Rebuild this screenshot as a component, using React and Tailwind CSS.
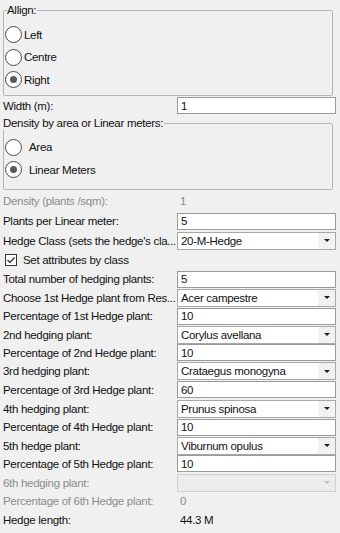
import { useState } from 'react';

const ROWS = [
  { label: 'Density (plants /sqm):', kind: 'static', value: '1', disabled: true, h: 'h-[21px]' },
  { label: 'Plants per Linear meter:', kind: 'text', value: '5', h: 'h-[20px]' },
  { label: "Hedge Class (sets the hedge's cla...", kind: 'combo', value: '20-M-Hedge', h: 'h-[19px]' },
  { kind: 'check', label: 'Set attributes by class', h: 'h-[20px]' },
  { label: 'Total number of hedging plants:', kind: 'text', value: '5', h: 'h-[18.5px]' },
  { label: 'Choose 1st Hedge plant from Res...', kind: 'combo', value: 'Acer campestre', h: 'h-[18.5px]' },
  { label: 'Percentage of 1st Hedge plant:', kind: 'text', value: '10', h: 'h-[18.5px]' },
  { label: '2nd hedging plant:', kind: 'combo', value: 'Corylus avellana', h: 'h-[18px]' },
  { label: 'Percentage of 2nd Hedge plant:', kind: 'text', value: '10', h: 'h-[18.5px]' },
  { label: '3rd hedging plant:', kind: 'combo', value: 'Crataegus monogyna', h: 'h-[18.5px]' },
  { label: 'Percentage of 3rd Hedge plant:', kind: 'text', value: '60', h: 'h-[18.5px]' },
  { label: '4th hedging plant:', kind: 'combo', value: 'Prunus spinosa', h: 'h-[19px]' },
  { label: 'Percentage of 4th Hedge plant:', kind: 'text', value: '10', h: 'h-[18.5px]' },
  { label: '5th hedge plant:', kind: 'combo', value: 'Viburnum opulus', h: 'h-[18px]' },
  { label: 'Percentage of 5th Hedge plant:', kind: 'text', value: '10', h: 'h-[18.5px]' },
  { label: '6th hedging plant:', kind: 'combo', value: '', disabled: true, h: 'h-[19px]' },
  { label: 'Percentage of 6th Hedge plant:', kind: 'static', value: '0', disabled: true, h: 'h-[18.5px]' },
  { label: 'Hedge length:', kind: 'static', value: '44.3 M', h: 'h-[18px]' },
];

function Radio({ label, checked, onClick, gap }) {
  return (
    <div className="flex items-center h-[22.5px] cursor-default" onClick={onClick}>
      <span className="w-[17px] h-[17px] ml-[1px] rounded-full border border-[#4a4a4a] bg-white flex items-center justify-center">
        {checked && <span className="w-[7px] h-[7px] rounded-full bg-[#5a5a5a]" />}
      </span>
      <span className={gap}>{label}</span>
    </div>
  );
}

function Arrow({ disabled }) {
  return (
    <span className={`w-0 h-0 border-l-[3px] border-r-[3px] border-t-[3px] border-l-transparent border-r-transparent ${disabled ? 'border-t-[#c0c0c0]' : 'border-t-[#202020]'}`} />
  );
}

function Control({ row }) {
  if (row.kind === 'text') {
    return (
      <div className="w-[159px] h-[17px] bg-white border border-[#9a9a9a] flex items-center pl-[3px]">
        {row.value}
      </div>
    );
  }
  if (row.kind === 'combo') {
    return (
      <div
        className={`w-[159px] h-[18px] border flex items-center ${
          row.disabled ? 'bg-[#ececec] border-[#cfcfcf]' : 'bg-white border-[#a8a8a8]'
        }`}
      >
        <span className="flex-1 pl-[3px]">{row.value}</span>
        <span className={`w-[17px] h-full flex items-center justify-center ${row.disabled ? '' : 'bg-[#f2f2f2]'}`}>
          <Arrow disabled={row.disabled} />
        </span>
      </div>
    );
  }
  return (
    <div className={`pl-[3px] ${row.disabled ? 'text-[#8c8c8c]' : ''}`}>{row.value}</div>
  );
}

export default function App() {
  const [align, setAlign] = useState('right');
  const [density, setDensity] = useState('linear');
  const [byClass, setByClass] = useState(true);

  return (
    <div
      className="w-[340px] h-[533px] bg-[#f0f0f0] text-[#111] text-[11.5px] tracking-[-0.3px] leading-[14px] px-[3px] pt-[3px] overflow-hidden"
      style={{ fontFamily: '"Liberation Sans", Arial, sans-serif' }}
    >
      <fieldset className="w-[330px] h-[93px] border border-[#b5b5b5] rounded-[2px]">
        <legend className="ml-[3px] pr-[1px]">Allign:</legend>
        <div className="pt-[6.5px]">
          <Radio label="Left" gap="ml-[2px]" checked={align === 'left'} onClick={() => setAlign('left')} />
          <Radio label="Centre" gap="ml-[2px]" checked={align === 'centre'} onClick={() => setAlign('centre')} />
          <Radio label="Right" gap="ml-[2px]" checked={align === 'right'} onClick={() => setAlign('right')} />
        </div>
      </fieldset>

      <div className="flex items-center h-[21px] mt-[-1px]">
        <span className="w-[174px]">Width (m):</span>
        <div className="w-[159px] h-[17px] bg-white border border-[#9a9a9a] flex items-center pl-[3px]">1</div>
      </div>

      <fieldset className="w-[330px] h-[74px] border border-[#b5b5b5] rounded-[2px]">
        <legend className="ml-[-1px] pr-[1px]">Density by area or Linear meters:</legend>
        <div className="pt-[6px]">
          <Radio label="Area" gap="ml-[7px]" checked={density === 'area'} onClick={() => setDensity('area')} />
          <Radio label="Linear Meters" gap="ml-[7px]" checked={density === 'linear'} onClick={() => setDensity('linear')} />
        </div>
      </fieldset>

      {ROWS.map((row, i) =>
        row.kind === 'check' ? (
          <div key={i} className={`flex items-center ${row.h}`} onClick={() => setByClass(!byClass)}>
            <span className="w-[12px] h-[12px] ml-[2px] border border-[#333] bg-white flex items-center justify-center">
              {byClass && (
                <svg width="10" height="10" viewBox="0 0 10 10">
                  <path d="M1.5 5 L4 7.5 L8.5 2.5" fill="none" stroke="#222" strokeWidth="1.2" />
                </svg>
              )}
            </span>
            <span className="ml-[6px]">{row.label}</span>
          </div>
        ) : (
          <div key={i} className={`flex items-center ${row.h}`}>
            <span className={`w-[174px] whitespace-nowrap overflow-hidden ${row.disabled ? 'text-[#8c8c8c]' : ''}`}>
              {row.label}
            </span>
            <Control row={row} />
          </div>
        )
      )}
    </div>
  );
}
